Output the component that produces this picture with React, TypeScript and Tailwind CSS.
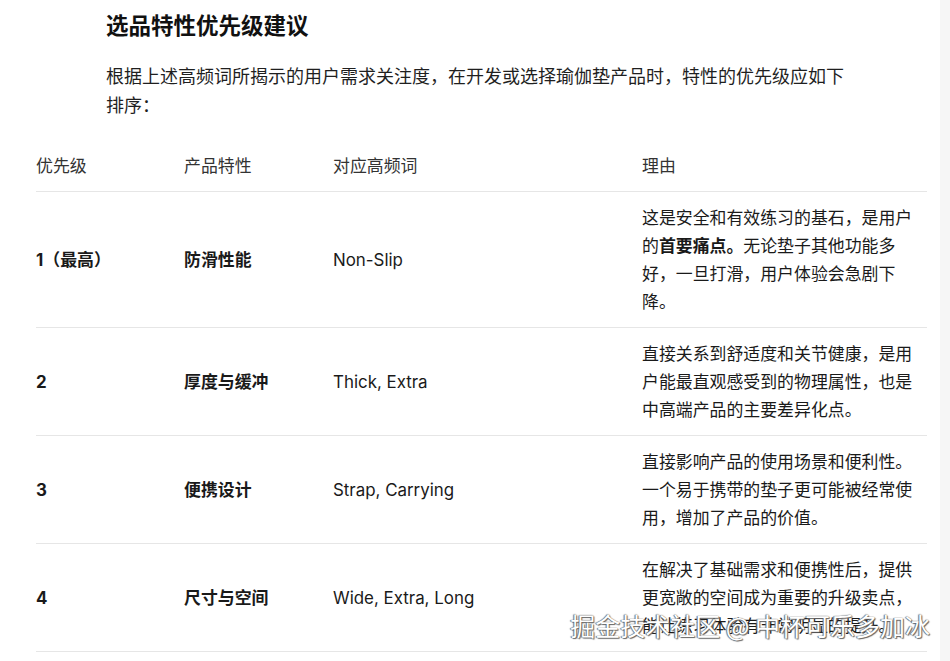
const FONT = "font-['Inter','Noto_Sans_CJK_SC',sans-serif]";

interface Row {
    level: string;
    feature: string;
    words: string;
    reason: React.ReactNode;
}

const ROWS: Row[] = [
    {
        level: "1（最高）",
        feature: "防滑性能",
        words: "Non-Slip",
        reason: (
            <>
                这是安全和有效练习的基石，是用户的<b className="font-bold">首要痛点。</b>无论垫子其他功能多好，一旦打滑，用户体验会急剧下降。
            </>
        ),
    },
    {
        level: "2",
        feature: "厚度与缓冲",
        words: "Thick, Extra",
        reason: "直接关系到舒适度和关节健康，是用户能最直观感受到的物理属性，也是中高端产品的主要差异化点。",
    },
    {
        level: "3",
        feature: "便携设计",
        words: "Strap, Carrying",
        reason: "直接影响产品的使用场景和便利性。一个易于携带的垫子更可能被经常使用，增加了产品的价值。",
    },
    {
        level: "4",
        feature: "尺寸与空间",
        words: "Wide, Extra, Long",
        reason: "在解决了基础需求和便携性后，提供更宽敞的空间成为重要的升级卖点，能让练习体验有非常明显的提升。",
    },
];

export default function App() {
    return (
        <div className={`relative flex h-[661px] w-[950px] overflow-hidden bg-white ${FONT}`}>
            <div className="flex-1 pl-[36px] pr-[3px]">
                {/* Heading + intro */}
                <div className="pl-[70px] pt-[10px]">
                    <h2 className="text-[22.5px] font-bold leading-[32px] text-[#111]">选品特性优先级建议</h2>
                    <p className="mt-[20px] w-[750px] text-[18px] leading-[29px] text-[#1f1f1f]">
                        根据上述高频词所揭示的用户需求关注度，在开发或选择瑜伽垫产品时，特性的优先级应如下排序：
                    </p>
                </div>

                {/* Priority table */}
                <table className="mt-[18px] w-[891px] table-fixed border-collapse text-[16.9px] leading-[28px]">
                    <colgroup>
                        <col className="w-[148px]" />
                        <col className="w-[149px]" />
                        <col className="w-[309px]" />
                        <col />
                    </colgroup>
                    <thead>
                        <tr className="border-b border-[#e6e6e6] text-left text-[#333]">
                            <th className="pb-[11px] pt-[14px] font-normal">优先级</th>
                            <th className="pb-[11px] pt-[14px] font-normal">产品特性</th>
                            <th className="pb-[11px] pt-[14px] font-normal">对应高频词</th>
                            <th className="pb-[11px] pt-[14px] font-normal">理由</th>
                        </tr>
                    </thead>
                    <tbody className="text-[#1a1a1a]">
                        {ROWS.map((row) => (
                            <tr key={row.level} className="border-b border-[#e6e6e6]">
                                <td className="py-[11.5px] align-middle font-bold">{row.level}</td>
                                <td className="py-[11.5px] align-middle font-bold">{row.feature}</td>
                                <td className="py-[11.5px] align-middle">{row.words}</td>
                                <td className="py-[11.5px] pr-[12px] align-middle">{row.reason}</td>
                            </tr>
                        ))}
                    </tbody>
                </table>
            </div>

            {/* scrollbar strip */}
            <div className="w-[10px] bg-[#f6f6f6]" />

            {/* watermark */}
            <div className="absolute right-[20px] top-[608px] whitespace-nowrap font-['Noto_Sans_CJK_SC',sans-serif] text-[25px] leading-[34px] text-white [text-shadow:0_0_1px_#555,1px_1px_1px_#666,-1px_0_1px_#777]">
                掘金技术社区 @ 中杯可乐多加冰
            </div>
        </div>
    );
}
